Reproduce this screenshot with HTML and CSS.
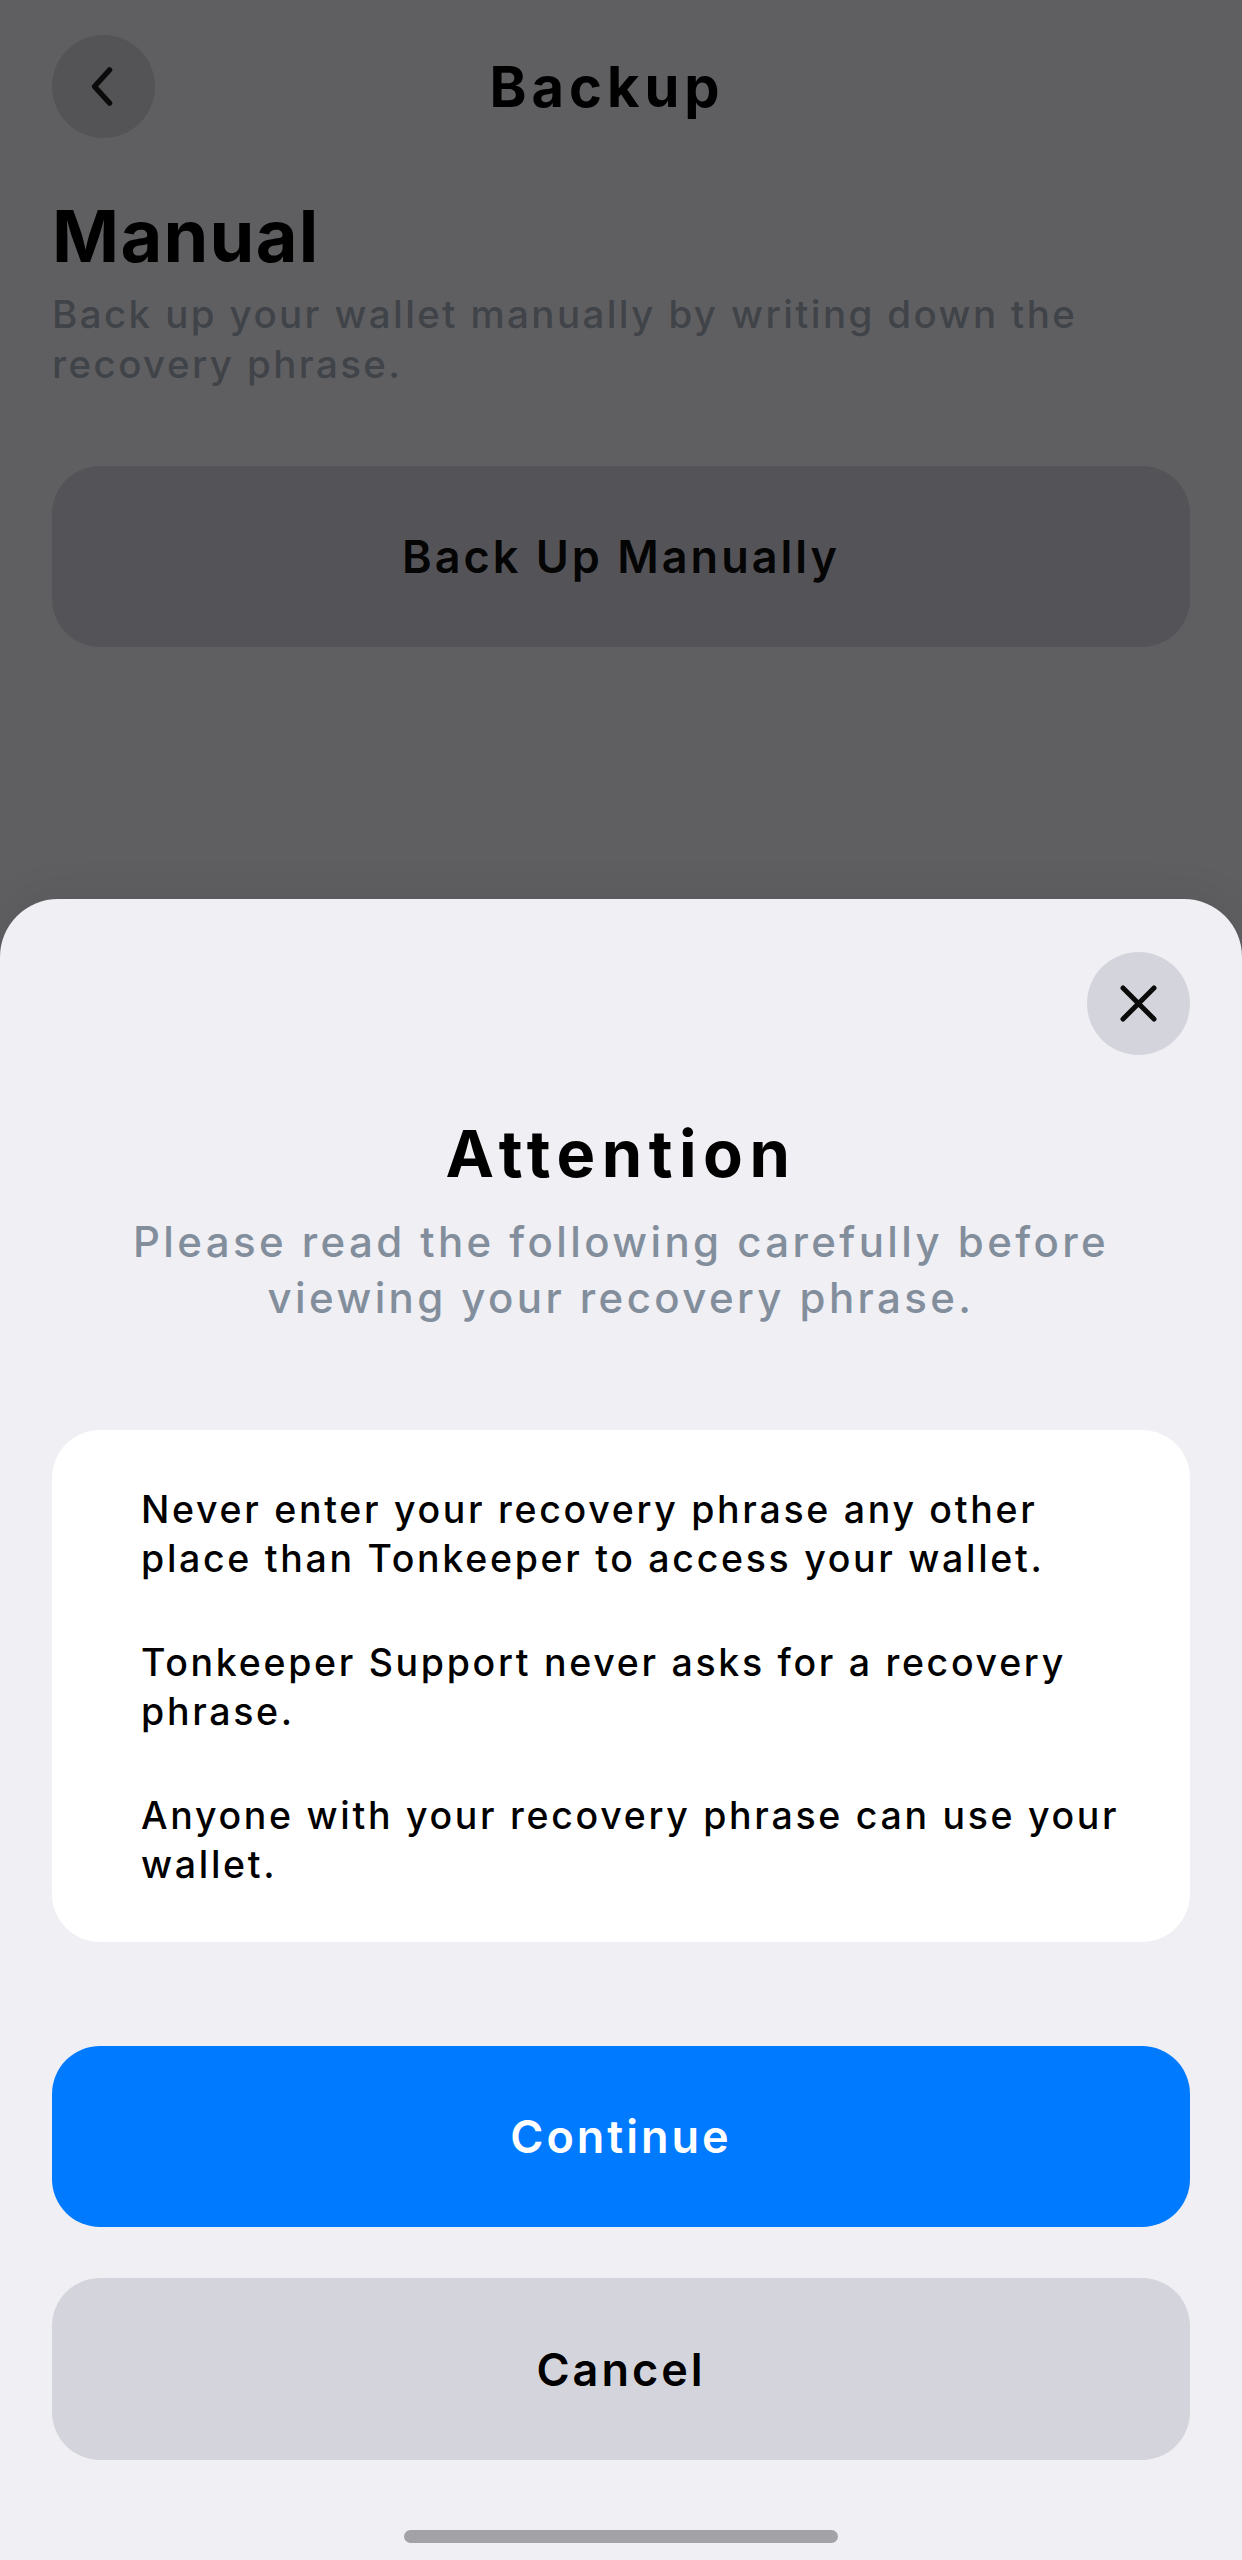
FILE: index.html
```html
<!DOCTYPE html>
<html lang="en">
<head>
<meta charset="utf-8">
<title>Backup</title>
<link rel="stylesheet" href="styles.css">
</head>
<body>
<div class="screen">
  <div class="page">
    <header class="nav">
      <div class="icon-btn back">
        <svg width="103" height="103" viewBox="0 0 103 103"><path d="M57.5 35 L42.5 51.5 L57.5 68" fill="none" stroke="#0b0b0c" stroke-width="5.5" stroke-linecap="round" stroke-linejoin="round"/></svg>
      </div>
      <div class="nav-title">Backup</div>
      <div class="nav-spacer"></div>
    </header>
    <h1 class="page-title">Manual</h1>
    <p class="page-desc">Back up your wallet manually by writing down the recovery phrase.</p>
    <div class="btn btn-dim">Back Up Manually</div>
  </div>

  <section class="sheet">
    <div class="sheet-top">
      <div class="icon-btn close">
        <svg width="103" height="103" viewBox="0 0 103 103"><path d="M36 36 L67 67 M67 36 L36 67" fill="none" stroke="#0a0a0a" stroke-width="5" stroke-linecap="round"/></svg>
      </div>
    </div>
    <h2 class="sheet-title">Attention</h2>
    <p class="sheet-sub">Please read the following carefully before viewing your recovery phrase.</p>
    <div class="card">
      <p class="card-text">Never enter your recovery phrase any other place than Tonkeeper to access your wallet.</p>
      <p class="card-text">Tonkeeper Support never asks for a recovery phrase.</p>
      <p class="card-text">Anyone with your recovery phrase can use your wallet.</p>
    </div>
    <div class="btn btn-primary">Continue</div>
    <div class="btn btn-secondary">Cancel</div>
    <div class="home-bar"></div>
  </section>
</div>
</body>
</html>
```

FILE: styles.css
```css
* { box-sizing: border-box; }
html, body { margin: 0; padding: 0; }
body {
  width: 1242px;
  height: 2560px;
  background: #5f5f62;
  font-family: Inter, "Noto Sans", "DejaVu Sans", sans-serif;
  color: #000;
  overflow: hidden;
}
.screen {
  display: flex;
  flex-direction: column;
  height: 2560px;
}
.page {
  padding: 35px 52px 0;
  display: flex;
  flex-direction: column;
}
.nav {
  display: grid;
  grid-template-columns: 103px 1fr 131px;
  align-items: center;
  height: 103px;
}
.icon-btn {
  width: 103px;
  height: 103px;
  border-radius: 50%;
  display: flex;
}
.back { background: #545457; }
.nav-title {
  text-align: center;
  font-weight: 700;
  font-size: 56px;
  letter-spacing: 5px;
  line-height: 66px;
}
.page-title {
  margin: 55px 0 0;
  font-size: 72px;
  font-weight: 700;
  line-height: 86px;
  letter-spacing: 1.3px;
}
.page-desc {
  margin: 10px 0 0;
  font-size: 38.5px;
  line-height: 50px;
  font-weight: 500;
  color: #404348;
  letter-spacing: 2.4px;
}
.btn {
  height: 181px;
  border-radius: 48px;
  display: flex;
  align-items: center;
  justify-content: center;
  font-size: 45px;
  font-weight: 600;
  letter-spacing: 3px;
}
.btn-dim {
  margin-top: 77px;
  background: #545458;
  color: #050505;
}
.sheet {
  margin-top: auto;
  height: 1661px;
  background: #efeff4;
  border-radius: 58px 58px 0 0;
  padding: 53px 52px 0;
  display: flex;
  flex-direction: column;
  box-shadow: 0 -8px 40px rgba(0,0,0,0.06);
}
.sheet-top {
  display: flex;
  justify-content: flex-end;
}
.close { background: #d4d5dc; }
.sheet-title {
  margin: 60px 0 0;
  text-align: center;
  font-size: 65px;
  line-height: 78px;
  font-weight: 700;
  letter-spacing: 6.5px;
}
.sheet-sub {
  margin: 21px 0 0;
  padding: 0 40px;
  text-align: center;
  font-size: 42px;
  line-height: 56px;
  font-weight: 500;
  color: #838e9c;
  letter-spacing: 3.4px;
}
.card {
  margin-top: 104px;
  background: #fff;
  border-radius: 48px;
  padding: 56px 60px 53px 89px;
  display: flex;
  flex-direction: column;
  gap: 56px;
}
.card-text {
  margin: 0;
  font-size: 37.5px;
  line-height: 48.5px;
  font-weight: 500;
  letter-spacing: 2.7px;
}
.btn-primary {
  margin-top: 104px;
  background: #007aff;
  color: #fff;
}
.btn-secondary {
  margin-top: 51px;
  height: 182px;
  background: #d4d5dc;
  color: #000;
}
.home-bar {
  margin: 70px auto 0;
  width: 434px;
  height: 13px;
  border-radius: 7px;
  background: #a2a2a7;
}
```
